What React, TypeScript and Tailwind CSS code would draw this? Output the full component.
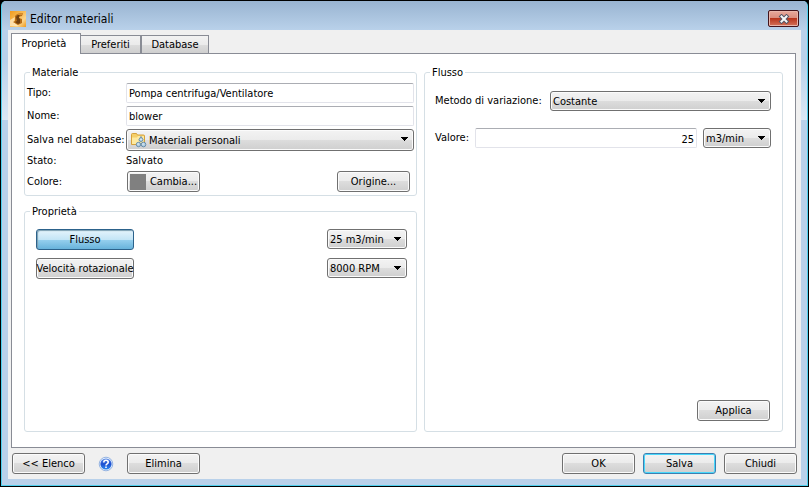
import { ReactNode } from 'react';

interface ButtonProps {
  children: ReactNode;
  className?: string;
  tone?: 'normal' | 'default' | 'pressed';
}

const tones = {
  normal:
    'border-[#707070] bg-[linear-gradient(#f3f3f3,#ebebeb_50%,#dddddd_50%,#cfcfcf)] shadow-[inset_0_0_0_1px_#fbfbfb]',
  default:
    'border-[#3c7fb1] bg-[linear-gradient(#f3f3f3,#ebebeb_50%,#dddddd_50%,#cfcfcf)] shadow-[inset_0_0_0_1px_#48d8fb]',
  pressed:
    'border-[#2c628b] bg-[linear-gradient(#e5f4fc,#c4e5f6_50%,#98d1ef_50%,#68b3db)] shadow-[inset_1px_1px_1px_#7a9eb1]'
};

function Button({ children, className = 'w-[73px]', tone = 'normal' }: ButtonProps) {
  return (
    <button
      type="button"
      className={`flex h-[21px] items-center justify-center whitespace-nowrap rounded-[3px] border pt-px ${tones[tone]} ${className}`}
    >
      {children}
    </button>
  );
}

interface SelectProps {
  value: string;
  id?: string;
  label?: string;
  icon?: ReactNode;
  className?: string;
}

function Select({ value, id, label, icon, className = '' }: SelectProps) {
  return (
    <div className={`relative ${className}`}>
      <select
        id={id}
        aria-label={label}
        className={`h-full w-full appearance-none rounded-[3px] border pr-4 pt-px ${tones.normal} ${icon ? 'pl-[22px]' : 'pl-[2px]'}`}
      >
        <option>{value}</option>
      </select>
      {icon && <span className="pointer-events-none absolute left-1 top-[3px]">{icon}</span>}
      <svg
        className="pointer-events-none absolute right-[5px] top-2"
        width="8"
        height="5"
        viewBox="0 0 8 5"
        shapeRendering="crispEdges"
      >
        <path d="M0 0h7v1H0zM1 1h5v1H1zM2 2h3v1H2zM3 3h1v1H3z" />
      </svg>
    </div>
  );
}

function Group({ title, children, className = '' }: { title: string; children: ReactNode; className?: string }) {
  return (
    <fieldset className={`min-w-0 rounded-[3px] border border-[#d5dfe5] ${className}`}>
      <legend className="ml-[5px] h-4 px-[2px] pt-px leading-4">{title}</legend>
      {children}
    </fieldset>
  );
}

const inputClass =
  'h-5 w-full min-w-0 rounded-[2px] border border-[#e2e3ea] border-t-[#abadb3] bg-white px-[2px] pt-[2px] outline-none';

const AppIcon = () => (
  <svg width="16" height="16" viewBox="0 0 16 16">
    <defs>
      <linearGradient id="app-bg" x1="0" y1="0" x2="1" y2="1">
        <stop offset="0" stopColor="#f09a1e" />
        <stop offset="0.45" stopColor="#f8bb55" />
        <stop offset="0.7" stopColor="#fbd48a" />
        <stop offset="1" stopColor="#ee9a1c" />
      </linearGradient>
    </defs>
    <path fill="url(#app-bg)" d="M0 0h16v16H0z" />
    <path fill="#fff0cf" d="M0 9l5-3-1 5 4 4H0z" opacity=".7" />
    <path fill="#b86d16" d="M5 5q2-3 8-3l-1 3q-3 0-3 2l3 1v4l-4 2-5-3 2-1z" />
    <path fill="#70400f" d="M6 6q1-2 4-3L9 6v1l1 1v4l-2 1-3-2 2-1z" />
    <path fill="#dc912f" d="M7 4q2-2 6-2l-1 2z" />
  </svg>
);

const FolderIcon = () => (
  <svg width="17" height="16" viewBox="0 0 17 16">
    <path d="M1.500 2.500q0-1 1-1h4l1 1.500h6q1 0 1 1v8.500h-13z" fill="#f5cf69" stroke="#d5a13c" />
    <path d="M2 5.500h5l1-1.500h6v8H2z" fill="#fde9a0" />
    <g fill="#b4d0e4" stroke="#5c86a6" strokeWidth=".9">
      <path d="M11 4.500l2 3a2 2 0 1 1-4 0z" />
      <circle cx="8.500" cy="12.500" r="2.200" />
      <circle cx="13.500" cy="12.500" r="2.300" />
    </g>
    <path d="M10.500 7h1v1h-1zM7.500 11.500h1v1h-1zM12.500 11.500h1v1h-1z" fill="#fff" />
  </svg>
);

const HelpIcon = () => (
  <svg width="16" height="16" viewBox="0 0 16 16">
    <defs>
      <linearGradient id="help-bg" x1="0" y1="0" x2="0" y2="1">
        <stop offset="0" stopColor="#5a8de8" />
        <stop offset="0.5" stopColor="#1c4fd0" />
        <stop offset="1" stopColor="#2f8df0" />
      </linearGradient>
    </defs>
    <circle cx="8" cy="8" r="6.800" fill="#e8f0fc" stroke="#7fa4dc" strokeWidth=".8" />
    <circle cx="8" cy="8" r="5.600" fill="url(#help-bg)" />
    <path d="M5.800 6.500q0-2.200 2.200-2.200t2.200 1.900q0 1-1.100 1.700T8 9.500" fill="none" stroke="#fff" strokeWidth="1.600" />
    <path d="M7.200 10.500h1.600V12H7.200z" fill="#fff" />
  </svg>
);

function TitleBar() {
  return (
    <header className="flex h-[29px] items-start justify-between bg-[linear-gradient(#99b4d1,#b9d1ea)] pl-2 pr-2 pt-[9px]">
      <div className="flex items-center gap-1">
        <AppIcon />
        <h1 className="pt-px text-[12px] leading-4">Editor materiali</h1>
      </div>
      <button
        type="button"
        aria-label="Chiudi finestra"
        className="flex h-[17px] w-[31px] items-center justify-center rounded-[2px] border border-[#43141c] bg-[linear-gradient(#e8a99c,#d98b7c_50%,#b8351d_50%,#d4735a)] shadow-[inset_0_0_0_1px_#e8b5aa]"
      >
        <svg width="12" height="10" viewBox="0 0 12 10">
          <path d="M3.500 2.500l5 5M8.500 2.500l-5 5" stroke="#535666" strokeWidth="4" strokeLinecap="square" />
          <path d="M3.500 2.500l5 5M8.500 2.500l-5 5" stroke="#f7f7f7" strokeWidth="2" strokeLinecap="square" />
        </svg>
      </button>
    </header>
  );
}

const tabClass =
  'h-[18px] border border-b-0 border-[#898c95] bg-[linear-gradient(#f2f2f2,#ebebeb_50%,#dddddd_50%,#cfcfcf)] pt-px text-center';

function Tabs() {
  return (
    <nav role="tablist" className="flex items-end">
      <button
        type="button"
        role="tab"
        aria-selected="true"
        className="z-10 -mb-px h-[21px] w-[70px] border border-b-0 border-[#898c95] bg-white pr-1"
      >
        Proprietà
      </button>
      <button type="button" role="tab" aria-selected="false" className={`w-[60px] border-l-0 ${tabClass}`}>
        Preferiti
      </button>
      <button type="button" role="tab" aria-selected="false" className={`w-[68px] ${tabClass}`}>
        Database
      </button>
    </nav>
  );
}

function MaterialGroup() {
  return (
    <Group title="Materiale" className="pb-[3px]">
      <div className="grid grid-cols-[96px_1fr] gap-x-[3px] pl-[2px] pr-[2px] pt-[3px] leading-5">
        <label htmlFor="tipo">Tipo:</label>
        <input id="tipo" className={inputClass} defaultValue="Pompa centrifuga/Ventilatore" />
        <label htmlFor="nome" className="mt-[3px]">Nome:</label>
        <input id="nome" className={`mt-[3px] ${inputClass}`} defaultValue="blower" />
        <label htmlFor="database" className="mt-[3px] whitespace-nowrap leading-[22px]">Salva nel database:</label>
        <Select id="database" value="Materiali personali" icon={<FolderIcon />} className="mt-[3px] h-[22px]" />
        <span>Stato:</span>
        <span>Salvato</span>
        <span className="pt-px">Colore:</span>
        <div className="flex justify-between pl-px pr-1">
          <Button className="w-[73px] gap-1">
            <span className="h-4 w-4 bg-[#808080]" />
            Cambia...
          </Button>
          <Button>Origine...</Button>
        </div>
      </div>
    </Group>
  );
}

const properties = [
  { name: 'Flusso', value: '25 m3/min', active: true },
  { name: 'Velocità rotazionale', value: '8000 RPM', active: false }
];

function PropertiesGroup() {
  return (
    <Group title="Proprietà" className="flex-1">
      <div className="flex flex-col gap-2 pl-[11px] pr-[9px] pt-[10px]">
        {properties.map((p) => (
          <div key={p.name} className="flex justify-between">
            <Button className="w-[98px]" tone={p.active ? 'pressed' : 'normal'}>
              {p.name}
            </Button>
            <Select label={p.name} value={p.value} className="h-5 w-20" />
          </div>
        ))}
      </div>
    </Group>
  );
}

function FlowGroup() {
  return (
    <fieldset className="flex min-w-0 flex-col rounded-[3px] border border-[#d5dfe5] pb-[10px] pl-[10px] pr-[11px]">
      <legend className="-ml-[5px] h-4 px-[2px] pt-px leading-4">Flusso</legend>
      <div className="flex items-center justify-between pt-[11px]">
        <label htmlFor="metodo" className="whitespace-nowrap">Metodo di variazione:</label>
        <Select id="metodo" value="Costante" className="h-5 w-[221px]" />
      </div>
      <div className="flex items-center gap-[6px] pt-[17px]">
        <label htmlFor="valore">Valore:</label>
        <input id="valore" className={`text-right ${inputClass}`} defaultValue="25" />
        <Select label="Unità" value="m3/min" className="h-5 w-[68px] shrink-0" />
      </div>
      <div className="mt-auto flex justify-end pr-px">
        <Button>Applica</Button>
      </div>
    </fieldset>
  );
}

export default function App() {
  return (
    <div className="flex min-h-screen bg-black p-px font-['DejaVu_Sans_Condensed','DejaVu_Sans',sans-serif] text-[11px] leading-4 text-black">
      <div className="flex flex-1 flex-col overflow-hidden rounded-t-[5px] border border-t-0 border-[#4fd0ee] bg-[linear-gradient(#b9d1ea_60px,#dbe8f5_119px,#b9d1ea_119px)]">
        <TitleBar />
        <main className="mx-[6px] mb-[6px] flex flex-1 flex-col bg-[#f0f0f0] px-[3px] pt-[3px]">
          <Tabs />
          <section className="mr-[2px] grid flex-1 grid-cols-[393fr_359fr] gap-[7px] border border-[#898c95] bg-white pb-[15px] pl-3 pr-3 pt-[10px]">
            <div className="flex flex-col gap-[7px]">
              <MaterialGroup />
              <PropertiesGroup />
            </div>
            <FlowGroup />
          </section>
          <footer className="flex items-center justify-between pb-[5px] pl-px pr-px pt-[5px]">
            <div className="flex items-center">
              <Button>{'<< Elenco'}</Button>
              <button type="button" aria-label="Guida" className="mx-[13px]">
                <HelpIcon />
              </button>
              <Button>Elimina</Button>
            </div>
            <div className="flex gap-2">
              <Button>OK</Button>
              <Button tone="default">Salva</Button>
              <Button>Chiudi</Button>
            </div>
          </footer>
        </main>
      </div>
    </div>
  );
}
